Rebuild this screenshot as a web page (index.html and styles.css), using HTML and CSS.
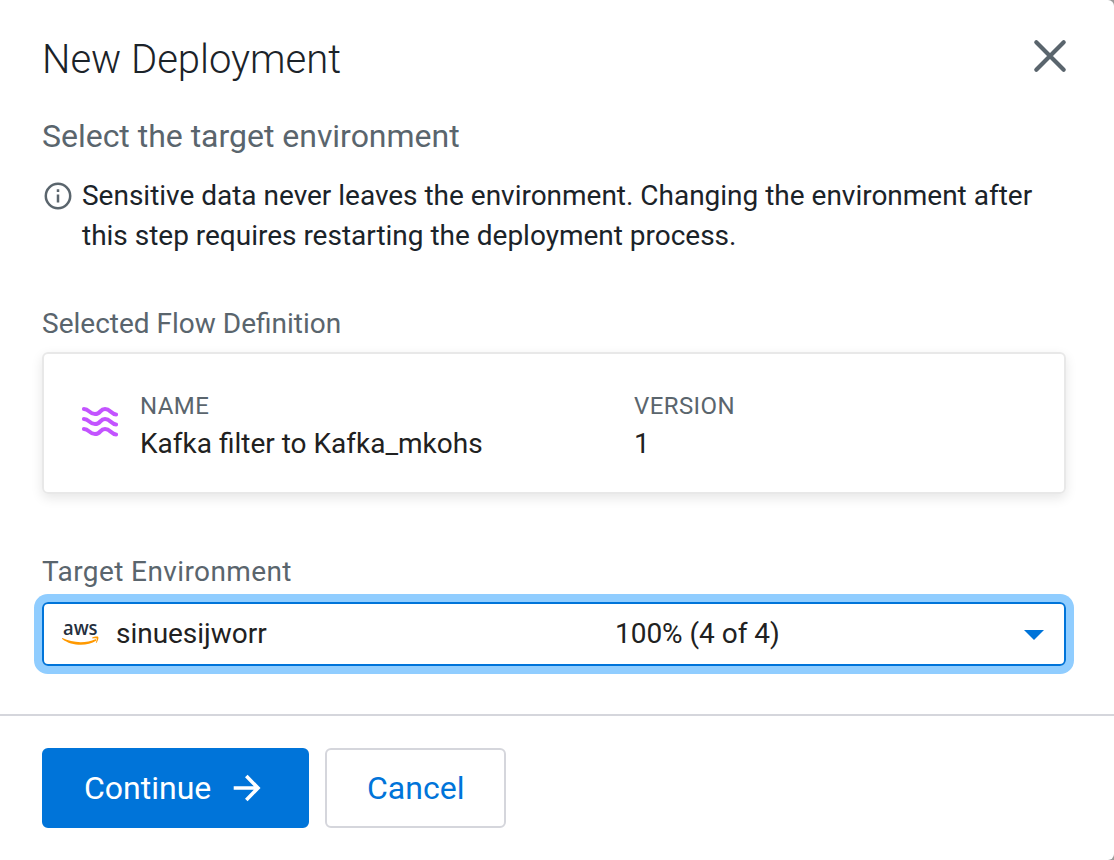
FILE: index.html
```
<!DOCTYPE html>
<html lang="en">
<head>
<meta charset="utf-8">
<title>New Deployment</title>
<link rel="stylesheet" href="styles.css">
</head>
<body>
<main class="modal">
  <header class="modal-header">
    <h1 class="title"><span>New Deployment</span></h1>
    <svg class="close" width="36" height="36" viewBox="0 0 36 36"><path d="M4.300 4.300 31.700 31.700M31.700 4.300 4.300 31.700"/></svg>
  </header>
  <section class="modal-body">
    <h2 class="subtitle"><span>Select the target environment</span></h2>
    <div class="info">
      <svg class="info-icon" width="28" height="28" viewBox="0 0 28 28"><circle cx="14" cy="14" r="12.2"/><path d="M14 12.4V20.4M14 7.3V9.9"/></svg>
      <p class="info-text"><span>Sensitive data never leaves the environment. Changing the environment after</span><br><span>this step requires restarting the deployment process.</span></p>
    </div>
    <div class="label flow-label"><span>Selected Flow Definition</span></div>
    <div class="card">
      <svg class="waves" width="40" height="34" viewBox="0 0 40 34"><path d="M3.900 4C9.500 4 8.800 9 15 9S19.500 4 25 4 31 9.400 36.100 9.400M3.900 14C9.500 14 8.800 19 15 19S19.500 14 25 14 31 19.400 36.100 19.400M3.900 24C9.500 24 8.800 29 15 29S19.500 24 25 24 31 29.400 36.100 29.400"/></svg>
      <div class="field name-field">
        <div class="caption"><span>NAME</span></div>
        <div class="value"><span>Kafka filter to Kafka_mkohs</span></div>
      </div>
      <div class="field">
        <div class="caption"><span>VERSION</span></div>
        <div class="value"><span>1</span></div>
      </div>
    </div>
    <div class="label target-label"><span>Target Environment</span></div>
    <div class="select">
      <svg class="aws" width="38" height="38" viewBox="0 -7 38 38">
        <text class="aws-name" x="1" y="14" textLength="34.5" lengthAdjust="spacingAndGlyphs">aws</text>
        <path class="aws-smile" d="M.5 17.1C10 22 24 22.500 33.4 18.300 34.3 17.900 35 19.100 34.1 19.800 25 25.700 9.500 25.200.2 17.900-.1 17.400.1 16.900.5 17.100Z"/>
        <path class="aws-smile" d="M30.300 16.500C32.300 15.300 36 15.300 36.300 16 36.800 17 35.900 20.500 34.300 21.900 34 22.100 33.700 22 33.900 21.600 34.500 20.200 35.200 18.200 34.800 17.600 34.400 17 32 17.200 30.600 17.400 30.200 17.400 30 16.800 30.300 16.500Z"/>
      </svg>
      <span class="env-name">sinuesijworr</span>
      <span class="env-health">100% (4 of 4)</span>
      <svg class="caret" width="20" height="10" viewBox="0 0 20 10"><path d="M0 0H20L10 10Z"/></svg>
    </div>
  </section>
  <footer class="modal-footer">
    <button class="btn primary"><span>Continue</span><svg class="arrow" width="28" height="28" viewBox="0 0 28 28"><path d="M.7 14H24.500M13.300 2.100 25 14 13.300 25.900"/></svg></button>
    <button class="btn secondary"><span>Cancel</span></button>
  </footer>
</main>
</body>
</html>
```
FILE: styles.css
```
* { box-sizing: border-box; }
html { background: #9b9b9b; }
body { margin: 0; font-family: Roboto, sans-serif; color: #1b2329; }
h1, h2, p { margin: 0; font-weight: 400; }
svg { display: block; flex: none; }
.modal {
  width: 1114px; height: 860px; background: #fff;
  border-radius: 0 6px 6px 0; overflow: hidden;
  display: flex; flex-direction: column;
}
.modal-header { display: flex; justify-content: space-between; padding: 36px 46px 0 42px; height: 116px; }
.title { font-size: 40px; line-height: 48px; font-weight: 300; letter-spacing: -.02px; }
.close { margin-top: 2px; fill: none; stroke: #5a656d; stroke-width: 4.2; stroke-linecap: round; }
.modal-body { height: 598px; padding: 0 48px 0 42px; }
.subtitle { font-size: 32px; line-height: 40px; color: #5a656d; letter-spacing: -.02px; }
.info { display: flex; gap: 10px; margin-top: 20px; padding-left: 2px; }
.info-icon { margin-top: 6px; fill: none; stroke: #5a656d; stroke-width: 2.5; }
.info-text { font-size: 28px; line-height: 40px; white-space: nowrap; letter-spacing: -.012px; }
.label { font-size: 28px; line-height: 40px; color: #5a656d; }
.flow-label { margin-top: 48px; }
.card {
  display: flex; margin-top: 8px; height: 142px; padding: 34px 38px;
  border: 2px solid #e8e8e8; border-radius: 6px; box-shadow: 0 4px 12px rgba(0,0,0,.1);
}
.waves { margin: 17px 20px 0 -2px; fill: none; stroke: #c354ff; stroke-width: 4; stroke-linecap: round; }
.name-field { width: 494px; }
.caption { font-size: 24px; line-height: 36px; color: #5a656d; letter-spacing: .4px; }
.value { font-size: 28px; line-height: 40px; color: #212121; }
.target-label { margin-top: 58px; letter-spacing: .4px; }
.select {
  display: flex; align-items: center; height: 64px; margin-top: 10px; padding: 0 20px 0 18px;
  border: 2px solid #0074d9; border-radius: 6px; box-shadow: 0 0 0 8px #90cdff;
  font-size: 28px; line-height: 40px; color: #212121; letter-spacing: -.03px;
}
.aws { margin: 0 16px 3px 0; }
.aws-name { font: 600 19px "Open Sans", sans-serif; fill: #252f3e; }
.aws-smile { fill: #f90; }
.env-name { width: 499px; }
.caret { margin: 2px 0 0 auto; fill: #0074d9; }
.modal-footer { display: flex; gap: 16px; height: 146px; padding: 32px 42px; border-top: 2px solid #d5d6dc; }
.btn {
  display: flex; align-items: center; height: 80px; padding: 0 40px; border: 2px solid #d5d6dc;
  border-radius: 6px; background: #fff; color: #0074d9; font: 400 32px/40px Roboto, sans-serif;
}
.primary { width: 267px; background: #0074d9; border-color: #0074d9; color: #fff; justify-content: space-between; }
.secondary { width: 181px; }
.arrow { margin-right: 6px; fill: none; stroke: #fff; stroke-width: 3.6; }
```
